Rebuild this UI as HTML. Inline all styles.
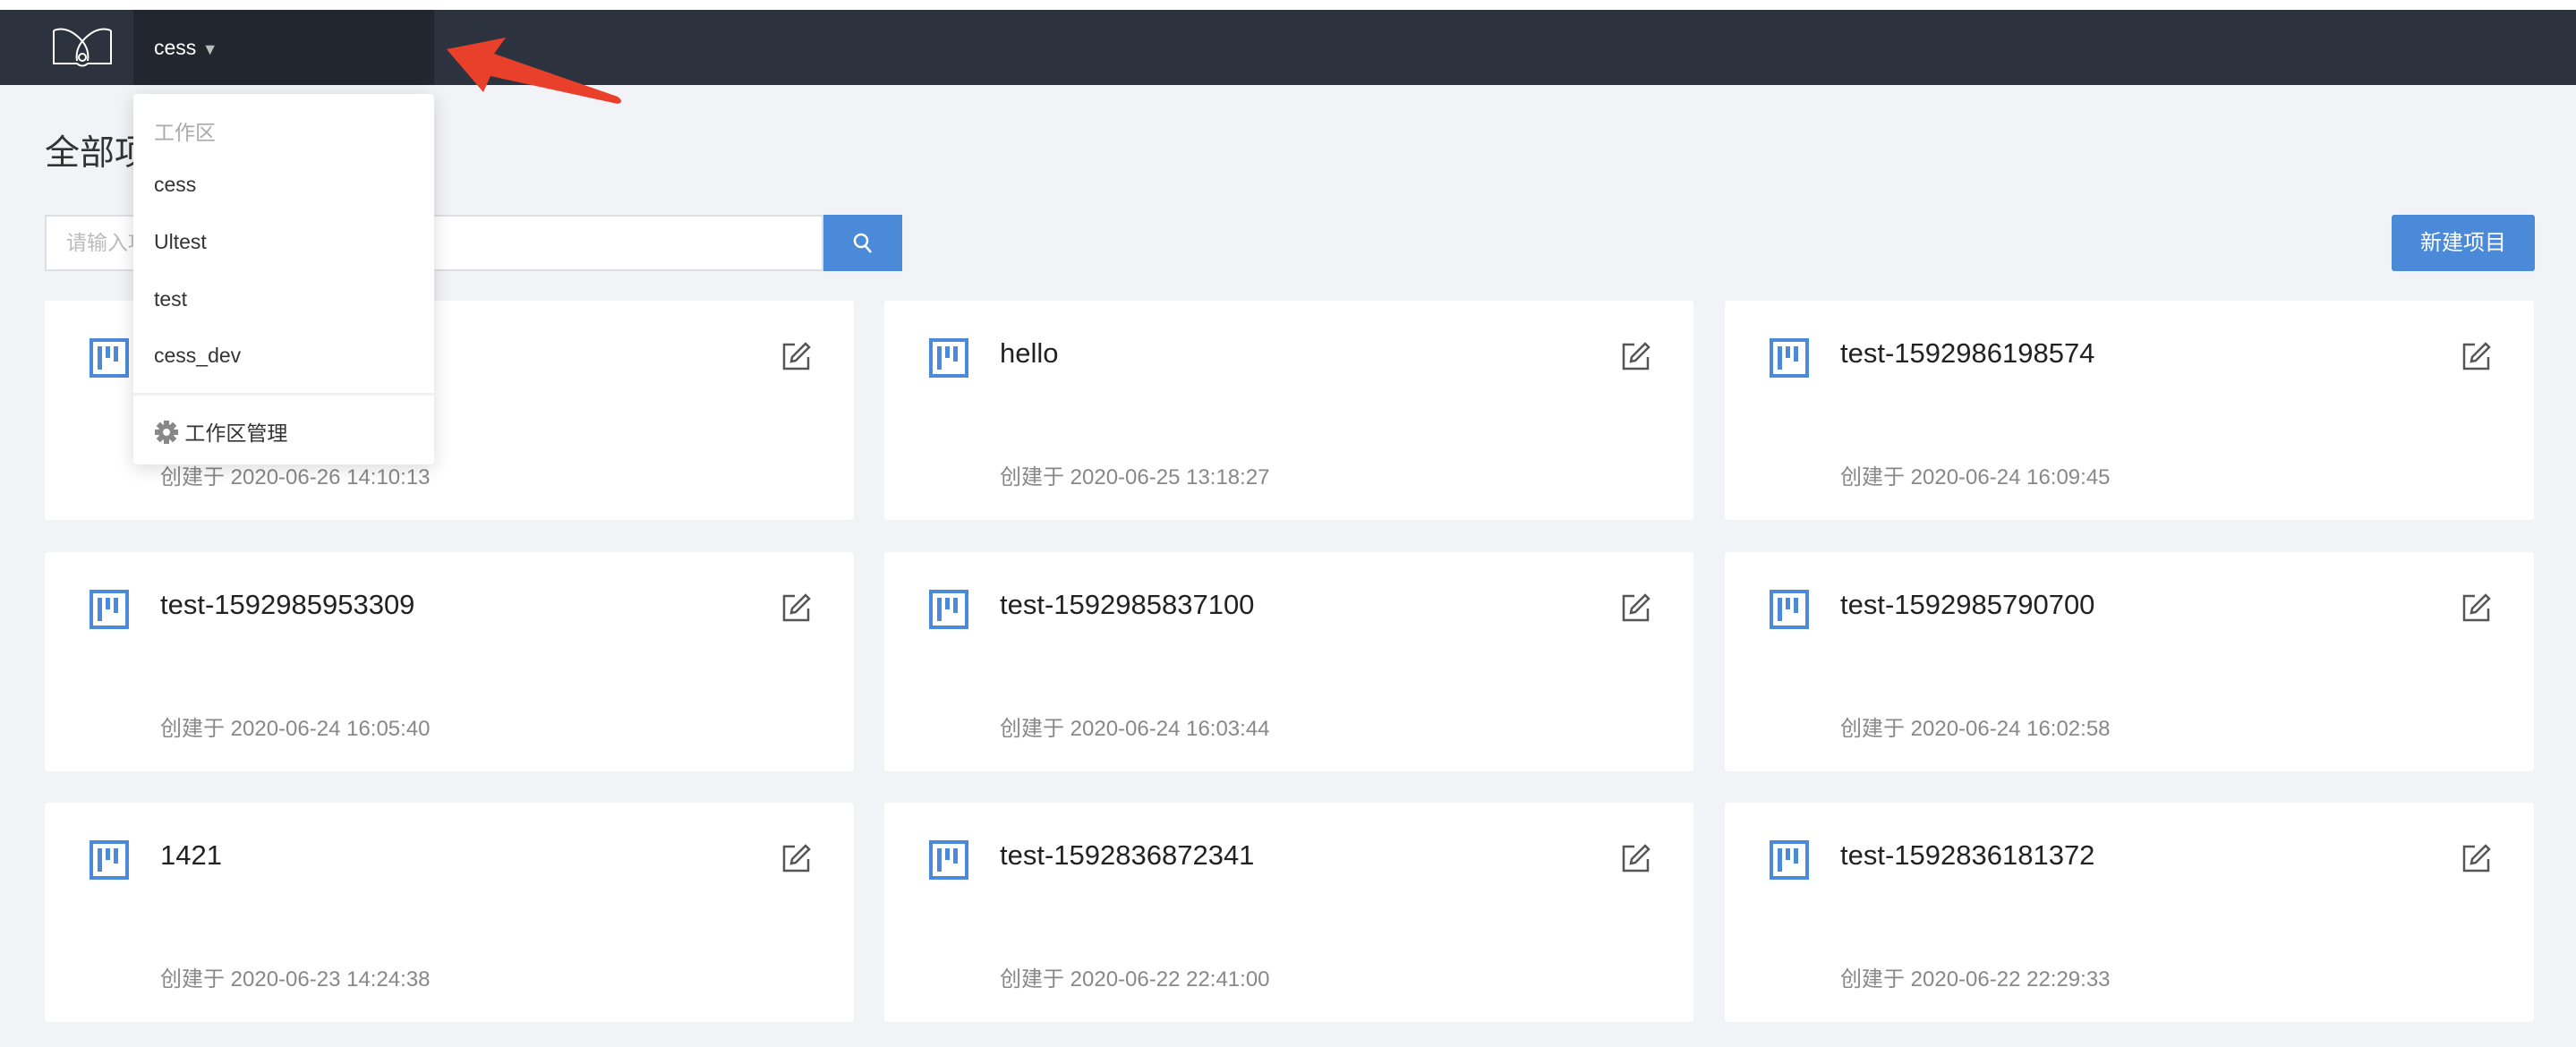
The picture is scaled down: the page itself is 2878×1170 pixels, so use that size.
<!DOCTYPE html>
<html><head><meta charset="utf-8"><style>
*{margin:0;padding:0;box-sizing:border-box}
body{width:2878px;height:1170px;background:#f2f3f7;font-family:"Liberation Sans","Noto Sans CJK SC",sans-serif;position:relative;overflow:hidden}
.top{position:absolute;left:0;top:0;width:2878px;height:11px;background:#fff}
.hdr{position:absolute;left:0;top:11px;width:2878px;height:84px;background:#2d333e}
.ws{position:absolute;left:149px;top:11px;width:336px;height:84px;background:#22262f;color:#fff;font-size:23px;line-height:84px;padding-left:23px}
.title{position:absolute;left:50px;top:140px;font-size:39px;color:#333}
.search{position:absolute;left:50px;top:240px;width:870px;height:63px;background:#fff;border:2px solid #dcdee3;font-size:23px;color:#bbb;line-height:59px;padding-left:22px}
.sbtn{position:absolute;left:920px;top:240px;width:88px;height:63px;background:#4a8ad9}
.nbtn{position:absolute;left:2672px;top:240px;width:160px;height:63px;background:#4a8ad9;color:#fff;font-size:24px;line-height:63px;text-align:center;border-radius:3px}
.card{position:absolute;width:904px;height:245px;background:#fff;border-radius:3px}
.card .ic{position:absolute;left:50px;top:42px}
.card .t{position:absolute;left:129px;top:41px;font-size:31px;color:#222}
.card .d{position:absolute;left:129px;top:177px;font-size:24px;color:#888}
.card .e{position:absolute;right:48px;top:46px}
.dd{position:absolute;left:149px;top:105px;width:336px;height:414px;background:#fff;border-radius:4px;box-shadow:0 4px 20px rgba(0,0,0,.15)}
.dd div{position:absolute;left:23px;font-size:23px;color:#333}
</style></head><body>
<div class="top"></div>
<div class="hdr"></div>
<svg style="position:absolute;left:58px;top:26px" width="68" height="50" viewBox="0 0 68 50" fill="none" stroke="#fff" stroke-width="2"><path d="M2 8 L2 45 L28 45 Q34 50 40 45 L66 45 L66 8 M2 8 Q18 2 34 20 Q50 2 66 8"/><path d="M34 20 Q26 30 28 42 M34 20 Q42 30 40 42"/><circle cx="34" cy="38" r="4"/></svg>
<div class="ws">cess <span style="font-size:18px;color:#bbb">▼</span></div>
<svg style="position:absolute;left:490px;top:40px" width="220" height="90" viewBox="0 0 220 90"><path d="M9 15 L75 2 L62 20 L200 68 Q208 74 200 76 L58 45 L50 63 Z" fill="#e8402a"/></svg>
<div class="title">全部项目</div>
<div class="search">请输入项目名称</div>
<div class="sbtn"><svg style="position:absolute;left:32px;top:19px" width="24" height="26" viewBox="0 0 24 26" fill="none" stroke="#fff" stroke-width="2.5"><circle cx="10" cy="10" r="7"/><path d="M15 16 L21 23"/></svg></div>
<div class="nbtn">新建项目</div>

<div class="card" style="left:50px;top:336px"><svg class="ic" width="44" height="44" viewBox="0 0 44 44"><rect x="2" y="2" width="40" height="40" fill="none" stroke="#4a8ad9" stroke-width="4"/><rect x="9" y="9" width="5" height="26" fill="#4a8ad9"/><rect x="18" y="9" width="5" height="13" fill="#4a8ad9"/><rect x="27" y="9" width="5" height="17" fill="#4a8ad9"/></svg><div class="t">cess</div><div class="d">创建于 2020-06-26 14:10:13</div><svg class="e" width="32" height="32" viewBox="0 0 32 32" fill="none" stroke="#555" stroke-width="2.5"><path d="M14 3 L2 3 L2 30 L29 30 L29 17"/><path d="M26 2 L30 6 L15 21 L10 22 L11 17 Z"/></svg></div>
<div class="card" style="left:988px;top:336px"><svg class="ic" width="44" height="44" viewBox="0 0 44 44"><rect x="2" y="2" width="40" height="40" fill="none" stroke="#4a8ad9" stroke-width="4"/><rect x="9" y="9" width="5" height="26" fill="#4a8ad9"/><rect x="18" y="9" width="5" height="13" fill="#4a8ad9"/><rect x="27" y="9" width="5" height="17" fill="#4a8ad9"/></svg><div class="t">hello</div><div class="d">创建于 2020-06-25 13:18:27</div><svg class="e" width="32" height="32" viewBox="0 0 32 32" fill="none" stroke="#555" stroke-width="2.5"><path d="M14 3 L2 3 L2 30 L29 30 L29 17"/><path d="M26 2 L30 6 L15 21 L10 22 L11 17 Z"/></svg></div>
<div class="card" style="left:1927px;top:336px"><svg class="ic" width="44" height="44" viewBox="0 0 44 44"><rect x="2" y="2" width="40" height="40" fill="none" stroke="#4a8ad9" stroke-width="4"/><rect x="9" y="9" width="5" height="26" fill="#4a8ad9"/><rect x="18" y="9" width="5" height="13" fill="#4a8ad9"/><rect x="27" y="9" width="5" height="17" fill="#4a8ad9"/></svg><div class="t">test-1592986198574</div><div class="d">创建于 2020-06-24 16:09:45</div><svg class="e" width="32" height="32" viewBox="0 0 32 32" fill="none" stroke="#555" stroke-width="2.5"><path d="M14 3 L2 3 L2 30 L29 30 L29 17"/><path d="M26 2 L30 6 L15 21 L10 22 L11 17 Z"/></svg></div>

<div class="card" style="left:50px;top:617px"><svg class="ic" width="44" height="44" viewBox="0 0 44 44"><rect x="2" y="2" width="40" height="40" fill="none" stroke="#4a8ad9" stroke-width="4"/><rect x="9" y="9" width="5" height="26" fill="#4a8ad9"/><rect x="18" y="9" width="5" height="13" fill="#4a8ad9"/><rect x="27" y="9" width="5" height="17" fill="#4a8ad9"/></svg><div class="t">test-1592985953309</div><div class="d">创建于 2020-06-24 16:05:40</div><svg class="e" width="32" height="32" viewBox="0 0 32 32" fill="none" stroke="#555" stroke-width="2.5"><path d="M14 3 L2 3 L2 30 L29 30 L29 17"/><path d="M26 2 L30 6 L15 21 L10 22 L11 17 Z"/></svg></div>
<div class="card" style="left:988px;top:617px"><svg class="ic" width="44" height="44" viewBox="0 0 44 44"><rect x="2" y="2" width="40" height="40" fill="none" stroke="#4a8ad9" stroke-width="4"/><rect x="9" y="9" width="5" height="26" fill="#4a8ad9"/><rect x="18" y="9" width="5" height="13" fill="#4a8ad9"/><rect x="27" y="9" width="5" height="17" fill="#4a8ad9"/></svg><div class="t">test-1592985837100</div><div class="d">创建于 2020-06-24 16:03:44</div><svg class="e" width="32" height="32" viewBox="0 0 32 32" fill="none" stroke="#555" stroke-width="2.5"><path d="M14 3 L2 3 L2 30 L29 30 L29 17"/><path d="M26 2 L30 6 L15 21 L10 22 L11 17 Z"/></svg></div>
<div class="card" style="left:1927px;top:617px"><svg class="ic" width="44" height="44" viewBox="0 0 44 44"><rect x="2" y="2" width="40" height="40" fill="none" stroke="#4a8ad9" stroke-width="4"/><rect x="9" y="9" width="5" height="26" fill="#4a8ad9"/><rect x="18" y="9" width="5" height="13" fill="#4a8ad9"/><rect x="27" y="9" width="5" height="17" fill="#4a8ad9"/></svg><div class="t">test-1592985790700</div><div class="d">创建于 2020-06-24 16:02:58</div><svg class="e" width="32" height="32" viewBox="0 0 32 32" fill="none" stroke="#555" stroke-width="2.5"><path d="M14 3 L2 3 L2 30 L29 30 L29 17"/><path d="M26 2 L30 6 L15 21 L10 22 L11 17 Z"/></svg></div>

<div class="card" style="left:50px;top:897px"><svg class="ic" width="44" height="44" viewBox="0 0 44 44"><rect x="2" y="2" width="40" height="40" fill="none" stroke="#4a8ad9" stroke-width="4"/><rect x="9" y="9" width="5" height="26" fill="#4a8ad9"/><rect x="18" y="9" width="5" height="13" fill="#4a8ad9"/><rect x="27" y="9" width="5" height="17" fill="#4a8ad9"/></svg><div class="t">1421</div><div class="d">创建于 2020-06-23 14:24:38</div><svg class="e" width="32" height="32" viewBox="0 0 32 32" fill="none" stroke="#555" stroke-width="2.5"><path d="M14 3 L2 3 L2 30 L29 30 L29 17"/><path d="M26 2 L30 6 L15 21 L10 22 L11 17 Z"/></svg></div>
<div class="card" style="left:988px;top:897px"><svg class="ic" width="44" height="44" viewBox="0 0 44 44"><rect x="2" y="2" width="40" height="40" fill="none" stroke="#4a8ad9" stroke-width="4"/><rect x="9" y="9" width="5" height="26" fill="#4a8ad9"/><rect x="18" y="9" width="5" height="13" fill="#4a8ad9"/><rect x="27" y="9" width="5" height="17" fill="#4a8ad9"/></svg><div class="t">test-1592836872341</div><div class="d">创建于 2020-06-22 22:41:00</div><svg class="e" width="32" height="32" viewBox="0 0 32 32" fill="none" stroke="#555" stroke-width="2.5"><path d="M14 3 L2 3 L2 30 L29 30 L29 17"/><path d="M26 2 L30 6 L15 21 L10 22 L11 17 Z"/></svg></div>
<div class="card" style="left:1927px;top:897px"><svg class="ic" width="44" height="44" viewBox="0 0 44 44"><rect x="2" y="2" width="40" height="40" fill="none" stroke="#4a8ad9" stroke-width="4"/><rect x="9" y="9" width="5" height="26" fill="#4a8ad9"/><rect x="18" y="9" width="5" height="13" fill="#4a8ad9"/><rect x="27" y="9" width="5" height="17" fill="#4a8ad9"/></svg><div class="t">test-1592836181372</div><div class="d">创建于 2020-06-22 22:29:33</div><svg class="e" width="32" height="32" viewBox="0 0 32 32" fill="none" stroke="#555" stroke-width="2.5"><path d="M14 3 L2 3 L2 30 L29 30 L29 17"/><path d="M26 2 L30 6 L15 21 L10 22 L11 17 Z"/></svg></div>

<div class="dd">
<div style="top:24px;color:#aaa">工作区</div>
<div style="top:88px">cess</div>
<div style="top:152px">Ultest</div>
<div style="top:216px">test</div>
<div style="top:279px">cess_dev</div>
<div style="left:0;top:334px;width:336px;height:3px;background:#eff0f3"></div>
<div style="top:360px"><svg width="28" height="28" viewBox="0 0 28 28" style="vertical-align:-5px"><g fill="#888"><circle cx="14" cy="14" r="9"/><rect x="11" y="1" width="6" height="26"/><rect x="1" y="11" width="26" height="6"/><rect x="11" y="1" width="6" height="26" transform="rotate(45 14 14)"/><rect x="11" y="1" width="6" height="26" transform="rotate(-45 14 14)"/></g><circle cx="14" cy="14" r="4" fill="#fff"/></svg> 工作区管理</div>
</div>
</body></html>
